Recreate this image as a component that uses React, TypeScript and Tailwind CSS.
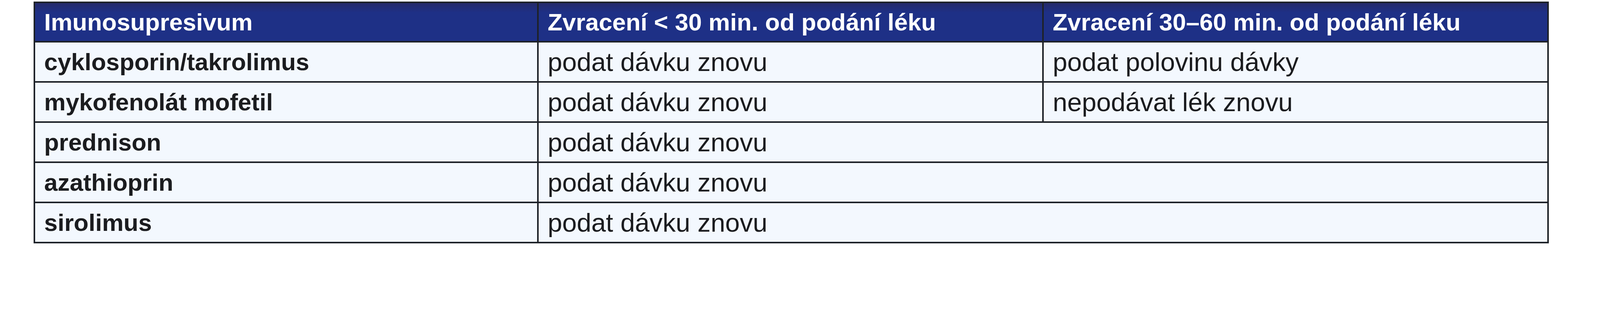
import React from "react";

// dosing after vomiting, per immunosuppressant
type Row = { drug: string; early: string; late?: string };

const ROWS: Row[] = [
  { drug: "cyklosporin/takrolimus", early: "podat dávku znovu", late: "podat polovinu dávky" },
  { drug: "mykofenolát mofetil", early: "podat dávku znovu", late: "nepodávat lék znovu" },
  { drug: "prednison", early: "podat dávku znovu" },
  { drug: "azathioprin", early: "podat dávku znovu" },
  { drug: "sirolimus", early: "podat dávku znovu" },
];

const cell = "flex items-center pl-[23px] leading-none";

export default function App() {
  return (
    <div className="min-h-screen bg-white pt-[4px] pl-[86px] font-['Liberation_Sans',Arial,sans-serif]">
      <div className="flex w-[3879px] flex-col border-[4px] border-[#1e2228] bg-[#f3f8fe]">
        <div className="grid h-[97px] grid-cols-[1285px_1293px_1293px] bg-linear-to-b from-[#242a6a] from-0% to-[#1e3086] to-25% text-[62px] font-bold text-white">
          <div className={cell}>Imunosupresivum</div>
          <div className={`${cell} border-l-[4px] border-[#1e2228]`}>Zvracení &lt; 30 min. od podání léku</div>
          <div className={`${cell} border-l-[4px] border-[#1e2228]`}>Zvracení 30–60 min. od podání léku</div>
        </div>
        {ROWS.map((r) => (
          <div
            key={r.drug}
            className="grid h-[103px] grid-cols-[1285px_1293px_1293px] border-t-[4px] border-[#1e2228] text-[#1b1c1f]"
          >
            <div className={`${cell} text-[62px] font-bold`}>{r.drug}</div>
            {r.late ? (
              <>
                <div className={`${cell} border-l-[4px] border-[#1e2228] text-[67px]`}>{r.early}</div>
                <div className={`${cell} border-l-[4px] border-[#1e2228] text-[67px]`}>{r.late}</div>
              </>
            ) : (
              <div className={`${cell} col-span-2 border-l-[4px] border-[#1e2228] text-[67px]`}>{r.early}</div>
            )}
          </div>
        ))}
      </div>
    </div>
  );
}
